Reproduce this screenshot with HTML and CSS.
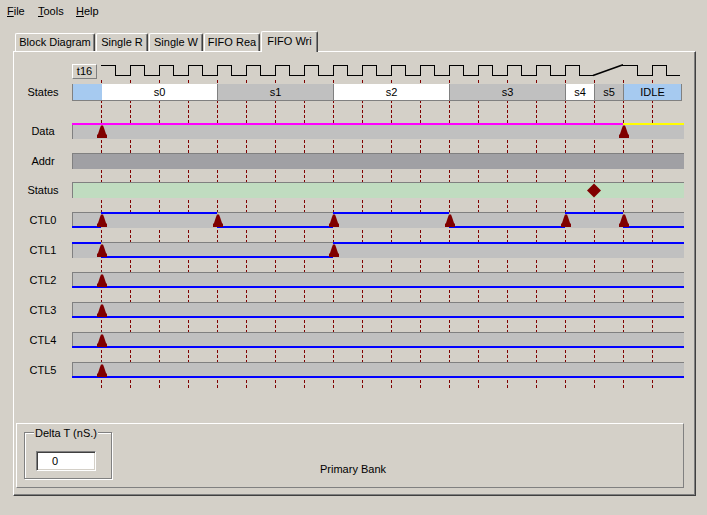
FILE: index.html
```
<!DOCTYPE html>
<html>
<head>
<meta charset="utf-8">
<link rel="stylesheet" href="styles.css">
</head>
<body>
<div class="menubar">
  <span class="menu-item menu-file"><u>F</u>ile</span>
  <span class="menu-item menu-tools"><u>T</u>ools</span>
  <span class="menu-item"><u>H</u>elp</span>
</div>
<div class="tabs">
  <div class="tab tab-block">Block Diagram</div>
  <div class="tab tab-sr">Single R</div>
  <div class="tab tab-sw">Single W</div>
  <div class="tab tab-fr">FIFO Rea</div>
  <div class="tab tab-fw active">FIFO Wri</div>
</div>
<div class="panel">
  <div class="chart">
    <svg width="0" height="0" class="defs">
      <defs>
        <path id="mk" d="M-4 15V12L-3 11L-2 8L-1 5L0 2.5L2 2.5L3 5L4 8L5 11L6 12V15Z" fill="#800000"/>
      </defs>
    </svg>
    <div class="row clock-row">
      <div class="label"></div>
      <div class="tbox">t16</div>
      <svg class="clock" width="587" height="16" viewBox="97 64 587 16">
        <path d="M101 65.5H115.5V75.5H130.5V65.5H144.5V75.5H159.5V65.5H173.5V75.5H188.5V65.5H202.5V75.5H217.5V65.5H231.5V75.5H246.5V65.5H260.5V75.5H275.5V65.5H289.5V75.5H304.5V65.5H318.5V75.5H333.5V65.5H347.5V75.5H362.5V65.5H376.5V75.5H391.5V65.5H405.5V75.5H420.5V65.5H434.5V75.5H449.5V65.5H463.5V75.5H478.5V65.5H492.5V75.5H507.5V65.5H521.5V75.5H536.5V65.5H550.5V75.5H565.5V65.5H579.5V75.5H594" fill="none" stroke="#000" shape-rendering="crispEdges"/>
        <path d="M593 75.5L623 64.8" fill="none" stroke="#000" stroke-width="1.6"/>
        <path d="M622 65.5H637.5V75.5H652.5V65.5H666.5V75.5H680" fill="none" stroke="#000" shape-rendering="crispEdges"/>
      </svg>
    </div>
    <div class="row states-row">
      <div class="label">States</div>
      <div class="states">
        <div class="st lead blue w1"></div>
        <div class="st white w4">s0</div>
        <div class="st gray w4">s1</div>
        <div class="st white w4">s2</div>
        <div class="st gray w4">s3</div>
        <div class="st white w1">s4</div>
        <div class="st gray w1">s5</div>
        <div class="st blue w2">IDLE</div>
      </div>
    </div>
    <div class="row sig-row data-row">
      <div class="label">Data</div>
      <svg class="bar" width="612" height="16" viewBox="0 0 612 16" shape-rendering="crispEdges">
        <rect width="612" height="16" fill="#c0c0c0"/>
        <path d="M0.5 16V0.5H612" fill="none" stroke="#808080"/>
        <rect x="0" y="0" width="551" height="2" fill="#ff00ff"/>
        <rect x="551" y="0" width="61" height="2" fill="#ffff00"/>
        <use href="#mk" x="29" shape-rendering="auto"/>
        <use href="#mk" x="551" shape-rendering="auto"/>
      </svg>
    </div>
    <div class="row sig-row">
      <div class="label">Addr</div>
      <svg class="bar" width="612" height="16" viewBox="0 0 612 16" shape-rendering="crispEdges">
        <rect width="612" height="16" fill="#a0a0a4"/>
        <path d="M0.5 16V0.5H612" fill="none" stroke="#808080"/>
      </svg>
    </div>
    <div class="row sig-row status-row">
      <div class="label">Status</div>
      <svg class="bar" width="612" height="16" viewBox="0 0 612 16" shape-rendering="crispEdges">
        <rect width="612" height="16" fill="#c0dcc0"/>
        <path d="M0.5 16V0.5H612" fill="none" stroke="#808080"/>
        <path d="M522 1.5L529 8.5L522 15.5L515 8.5Z" fill="#800000" shape-rendering="auto"/>
      </svg>
    </div>
    <div class="row sig-row">
      <div class="label">CTL0</div>
      <svg class="bar" width="612" height="16" viewBox="0 0 612 16" shape-rendering="crispEdges">
        <rect width="612" height="16" fill="#c0c0c0"/>
        <path d="M0.5 16V0.5H612" fill="none" stroke="#808080"/>
        <rect x="0" y="14" width="29" height="2" fill="#0000ff"/>
        <rect x="29" y="0" width="116" height="2" fill="#0000ff"/>
        <rect x="145" y="14" width="116" height="2" fill="#0000ff"/>
        <rect x="261" y="0" width="116" height="2" fill="#0000ff"/>
        <rect x="377" y="14" width="116" height="2" fill="#0000ff"/>
        <rect x="493" y="0" width="58" height="2" fill="#0000ff"/>
        <rect x="551" y="14" width="61" height="2" fill="#0000ff"/>
        <use href="#mk" x="29" shape-rendering="auto"/>
        <use href="#mk" x="145" shape-rendering="auto"/>
        <use href="#mk" x="261" shape-rendering="auto"/>
        <use href="#mk" x="377" shape-rendering="auto"/>
        <use href="#mk" x="493" shape-rendering="auto"/>
        <use href="#mk" x="551" shape-rendering="auto"/>
      </svg>
    </div>
    <div class="row sig-row">
      <div class="label">CTL1</div>
      <svg class="bar" width="612" height="16" viewBox="0 0 612 16" shape-rendering="crispEdges">
        <rect width="612" height="16" fill="#c0c0c0"/>
        <path d="M0.5 16V0.5H612" fill="none" stroke="#808080"/>
        <rect x="0" y="0" width="29" height="2" fill="#0000ff"/>
        <rect x="29" y="14" width="232" height="2" fill="#0000ff"/>
        <rect x="261" y="0" width="351" height="2" fill="#0000ff"/>
        <use href="#mk" x="29" shape-rendering="auto"/>
        <use href="#mk" x="261" shape-rendering="auto"/>
      </svg>
    </div>
    <div class="row sig-row">
      <div class="label">CTL2</div>
      <svg class="bar" width="612" height="16" viewBox="0 0 612 16" shape-rendering="crispEdges">
        <rect width="612" height="16" fill="#c0c0c0"/>
        <path d="M0.5 16V0.5H612" fill="none" stroke="#808080"/>
        <rect x="0" y="14" width="612" height="2" fill="#0000ff"/>
        <use href="#mk" x="29" shape-rendering="auto"/>
      </svg>
    </div>
    <div class="row sig-row">
      <div class="label">CTL3</div>
      <svg class="bar" width="612" height="16" viewBox="0 0 612 16" shape-rendering="crispEdges">
        <rect width="612" height="16" fill="#c0c0c0"/>
        <path d="M0.5 16V0.5H612" fill="none" stroke="#808080"/>
        <rect x="0" y="14" width="612" height="2" fill="#0000ff"/>
        <use href="#mk" x="29" shape-rendering="auto"/>
      </svg>
    </div>
    <div class="row sig-row">
      <div class="label">CTL4</div>
      <svg class="bar" width="612" height="16" viewBox="0 0 612 16" shape-rendering="crispEdges">
        <rect width="612" height="16" fill="#c0c0c0"/>
        <path d="M0.5 16V0.5H612" fill="none" stroke="#808080"/>
        <rect x="0" y="14" width="612" height="2" fill="#0000ff"/>
        <use href="#mk" x="29" shape-rendering="auto"/>
      </svg>
    </div>
    <div class="row sig-row">
      <div class="label">CTL5</div>
      <svg class="bar" width="612" height="16" viewBox="0 0 612 16" shape-rendering="crispEdges">
        <rect width="612" height="16" fill="#c0c0c0"/>
        <path d="M0.5 16V0.5H612" fill="none" stroke="#808080"/>
        <rect x="0" y="14" width="612" height="2" fill="#0000ff"/>
        <use href="#mk" x="29" shape-rendering="auto"/>
      </svg>
    </div>
  </div>
  <div class="bottom">
    <div class="groupbox">
      <div class="caption">Delta T (nS.)</div>
      <div class="textbox">0</div>
    </div>
    <div class="bank">Primary Bank</div>
  </div>
</div>
</body>
</html>
```

FILE: styles.css
```
html, body {
  margin: 0;
  padding: 0;
}
body {
  width: 707px;
  height: 515px;
  overflow: hidden;
  background: #d4d0c8;
  font-family: "Liberation Sans", Arial, sans-serif;
  font-size: 11px;
  line-height: 13px;
  color: #000;
}

/* menu */
.menubar {
  display: flex;
  height: 18px;
  box-sizing: border-box;
  padding: 5px 0 0 7px;
}
.menu-file { width: 31px; }
.menu-tools { width: 38px; }
.menu-item u { text-decoration: underline; }

/* tabs */
.tabs {
  display: flex;
  align-items: flex-end;
  height: 20px;
  margin-top: 13px;
  padding-left: 15px;
}
.tab {
  height: 18px;
  box-sizing: border-box;
  border-top: 1px solid #fff;
  border-left: 1px solid #fff;
  border-right: 1px solid #404040;
  box-shadow: inset -1px 0 #808080;
  border-radius: 2px 2px 0 0;
  text-align: center;
  line-height: 16px;
  margin-right: 1px;
  white-space: nowrap;
  flex: none;
}
.tab-block { width: 80px; }
.tab-sr { width: 52px; }
.tab-sw { width: 54px; }
.tab-fr { width: 56px; }
.tab-fw { width: 57px; }
.tab.active {
  height: 21px;
  margin-bottom: -1px;
  line-height: 18px;
  position: relative;
  z-index: 2;
  background: #d4d0c8;
}

/* panel */
.panel {
  margin-left: 13px;
  width: 683px;
  height: 445px;
  box-sizing: border-box;
  border-top: 1px solid #fff;
  border-left: 1px solid #fff;
  border-right: 1px solid #404040;
  border-bottom: 1px solid #404040;
  box-shadow: inset -1px -1px #808080;
}

.chart {
  position: relative;
  z-index: 0;
  padding-top: 12px;
}
.chart::before {
  content: "";
  position: absolute;
  z-index: -1;
  left: 87px;
  top: 28px;
  width: 552px;
  height: 308px;
  background: repeating-linear-gradient(to bottom, #800000 0 3px, transparent 3px 5px);
  -webkit-mask-image: repeating-linear-gradient(to right, #000 0 1px, transparent 1px 29px);
  mask-image: repeating-linear-gradient(to right, #000 0 1px, transparent 1px 29px);
}
.defs {
  position: absolute;
  width: 0;
  height: 0;
}

.row {
  display: flex;
}
.label {
  width: 58px;
  flex: none;
  text-align: center;
  align-self: center;
}

.clock-row {
  height: 16px;
}
.tbox {
  width: 25px;
  height: 15px;
  flex: none;
  box-sizing: border-box;
  border: 1px solid;
  border-color: #fff #808080 #808080 #fff;
  text-align: center;
  line-height: 13px;
}
.clock {
  display: block;
  flex: none;
}

.states-row {
  margin-top: 4px;
  height: 17px;
}
.states {
  display: flex;
  height: 17px;
  box-sizing: border-box;
  border-left: 1px solid #808080;
  border-bottom: 1px solid #808080;
}
.st {
  box-sizing: border-box;
  border-right: 1px solid #808080;
  text-align: center;
  line-height: 16px;
  flex: none;
}
.st.lead { border-right: none; }
.st.w1 { width: 29px; }
.st.w2 { width: 58px; }
.st.w4 { width: 116px; }
.st.blue { background: #a6caf0; }
.st.white { background: #fff; }
.st.gray { background: #c0c0c0; }

.sig-row {
  margin-top: 14px;
  height: 16px;
}
.sig-row.data-row { margin-top: 22px; }
.sig-row.status-row { margin-top: 13px; }
.bar {
  display: block;
  flex: none;
}

/* bottom */
.bottom {
  margin: 45px 0 0 2px;
  width: 668px;
  height: 65px;
  box-sizing: border-box;
  border-top: 1px solid #fff;
  border-left: 1px solid #fff;
  border-right: 1px solid #808080;
  border-bottom: 1px solid #808080;
  display: flex;
  align-items: flex-start;
  padding: 8px 0 0 7px;
}
.groupbox {
  width: 88px;
  height: 47px;
  flex: none;
  box-sizing: border-box;
  border: 1px solid #808080;
  box-shadow: inset 1px 1px #fff, 1px 1px #fff;
  padding-left: 9px;
}
.caption {
  width: fit-content;
  margin-top: -6px;
  padding: 0 1px;
  background: #d4d0c8;
  line-height: 13px;
  white-space: nowrap;
}
.textbox {
  margin: 11px 0 0 2px;
  width: 60px;
  height: 20px;
  box-sizing: border-box;
  border-top: 1px solid #808080;
  border-left: 1px solid #808080;
  border-right: 1px solid #fff;
  border-bottom: 1px solid #fff;
  box-shadow: inset 1px 1px #404040, inset -1px -1px #d4d0c8;
  background: #fff;
  padding-left: 15px;
  line-height: 18px;
}
.bank {
  margin: 31px 0 0 208px;
  white-space: nowrap;
}
```
